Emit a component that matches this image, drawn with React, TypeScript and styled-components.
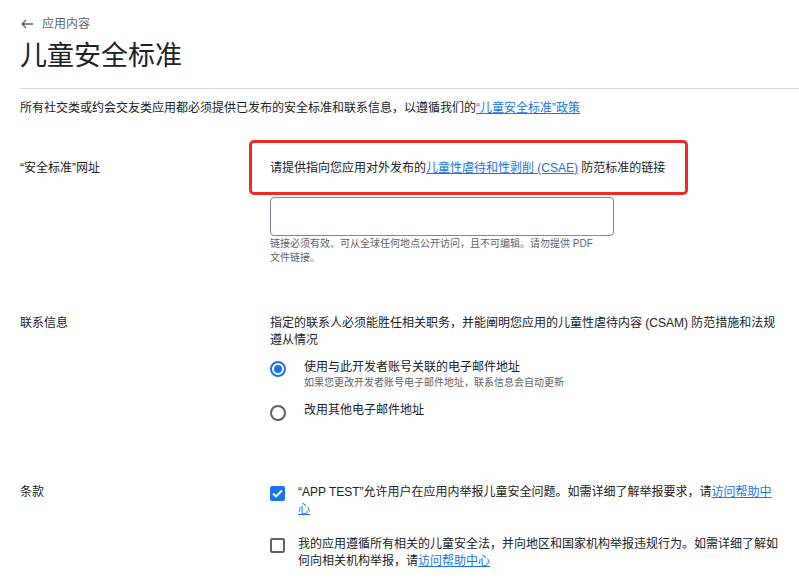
import React, { FC } from 'react'
import styled, { createGlobalStyle } from 'styled-components'

const GlobalStyle = createGlobalStyle`
  body {
    margin: 0;
    background: #fff;
    color: #202124;
    font-family: "Liberation Sans", "Noto Sans CJK SC", sans-serif;
  }
`

const Page = styled.div`
  padding: 16px 0 40px 20px;
`

const BackLink = styled.div`
  display: flex;
  align-items: center;
  gap: 9px;
  padding-left: 1px;
  font-size: 12px;
  line-height: 16px;
  color: #5f6368;
`

const Title = styled.h1`
  margin: 6px 0 0;
  font-size: 27px;
  font-weight: 400;
  line-height: 36px;
  color: #202124;
`

const Divider = styled.hr`
  margin: 14px 0 0;
  border: 0;
  border-top: 1px solid #dadce0;
`

const Intro = styled.p`
  margin: 10px 0 0;
  font-size: 12px;
  line-height: 18px;
`

const Link = styled.a`
  color: #1a73e8;
  text-decoration: underline;
  cursor: pointer;
`

const Section = styled.section<{ $top: number }>`
  display: grid;
  grid-template-columns: 250px 1fr;
  padding: ${(p) => p.$top}px 18px 0 0;
`

const Label = styled.div`
  font-size: 12px;
  line-height: 17px;
`

const Body = styled.div`
  font-size: 12px;
  line-height: 17px;
`

const Highlight = styled.span`
  position: relative;
  display: inline-block;

  &::after {
    content: '';
    position: absolute;
    left: -21px;
    right: -23px;
    top: -19.5px;
    bottom: -18.5px;
    border: 3px solid #ee2a24;
    border-radius: 5px;
    pointer-events: none;
  }
`

const TextInput = styled.input`
  display: block;
  box-sizing: border-box;
  width: 344px;
  height: 39px;
  margin-top: 20.5px;
  border: 1px solid #80868b;
  border-radius: 4px;
  outline: none;
`

const Help = styled.div`
  max-width: 332px;
  margin-top: 1px;
  font-size: 10px;
  line-height: 14px;
  color: #5f6368;
`

const Option = styled.div<{ $top: number }>`
  display: flex;
  align-items: flex-start;
  gap: 18px;
  margin-top: ${(p) => p.$top}px;
`

const Radio = styled.span<{ $checked?: boolean }>`
  flex: none;
  box-sizing: border-box;
  width: 16px;
  height: 16px;
  margin-top: 2.5px;
  border-radius: 50%;
  border: 2px solid ${(p) => (p.$checked ? '#1a73e8' : '#5f6368')};
  display: flex;
  align-items: center;
  justify-content: center;

  &::after {
    content: '';
    width: 8px;
    height: 8px;
    border-radius: 50%;
    background: ${(p) => (p.$checked ? '#1a73e8' : 'transparent')};
  }
`

const OptionSub = styled.div`
  font-size: 10px;
  line-height: 14px;
  color: #5f6368;
`

const CheckRow = styled.div<{ $top: number }>`
  display: flex;
  align-items: flex-start;
  gap: 13px;
  margin-top: ${(p) => p.$top}px;
`

const Check = styled.span<{ $checked?: boolean }>`
  flex: none;
  box-sizing: border-box;
  width: 15px;
  height: 15px;
  margin-top: 2px;
  border-radius: 2px;
  border: 2px solid ${(p) => (p.$checked ? '#1a73e8' : '#5f6368')};
  background: ${(p) => (p.$checked ? '#1a73e8' : '#fff')};
  display: flex;
  align-items: center;
  justify-content: center;
`

const App: FC = () => {
  return (
    <Page>
      <GlobalStyle />
      <BackLink>
        <svg width="12" height="10" viewBox="0 0 12 10" fill="none">
          <path d="M5 1 L1 5 L5 9 M1 5 H12" stroke="#5f6368" strokeWidth="1.3" />
        </svg>
        应用内容
      </BackLink>
      <Title>儿童安全标准</Title>
      <Divider />
      <Intro>
        所有社交类或约会交友类应用都必须提供已发布的安全标准和联系信息，以遵循我们的
        <Link>“儿童安全标准”政策</Link>
      </Intro>

      <Section $top={42.5}>
        <Label>“安全标准”网址</Label>
        <div>
          <Body>
            <Highlight>
              请提供指向您应用对外发布的<Link>儿童性虐待和性剥削 (CSAE)</Link> 防范标准的链接
            </Highlight>
          </Body>
          <TextInput type="text" />
          <Help>链接必须有效、可从全球任何地点公开访问，且不可编辑。请勿提供 PDF 文件链接。</Help>
        </div>
      </Section>

      <Section $top={49.5}>
        <Label>联系信息</Label>
        <div>
          <Body>指定的联系人必须能胜任相关职务，并能阐明您应用的儿童性虐待内容 (CSAM) 防范措施和法规遵从情况</Body>
          <Option $top={10}>
            <Radio $checked />
            <div>
              <Body>使用与此开发者账号关联的电子邮件地址</Body>
              <OptionSub>如果您更改开发者账号电子邮件地址，联系信息会自动更新</OptionSub>
            </div>
          </Option>
          <Option $top={12.5}>
            <Radio />
            <Body>改用其他电子邮件地址</Body>
          </Option>
        </div>
      </Section>

      <Section $top={63}>
        <Label>条款</Label>
        <div>
          <CheckRow $top={0}>
            <Check $checked>
              <svg width="11" height="9" viewBox="0 0 11 9" fill="none">
                <path d="M1 4.5 L4 7.5 L10 1.5" stroke="#fff" strokeWidth="1.8" />
              </svg>
            </Check>
            <Body>
              “APP TEST”允许用户在应用内举报儿童安全问题。如需详细了解举报要求，请<Link>访问帮助中心</Link>
            </Body>
          </CheckRow>
          <CheckRow $top={18}>
            <Check />
            <Body>
              我的应用遵循所有相关的儿童安全法，并向地区和国家机构举报违规行为。如需详细了解如何向相关机构举报，请
              <Link>访问帮助中心</Link>
            </Body>
          </CheckRow>
        </div>
      </Section>
    </Page>
  )
}

export default App
